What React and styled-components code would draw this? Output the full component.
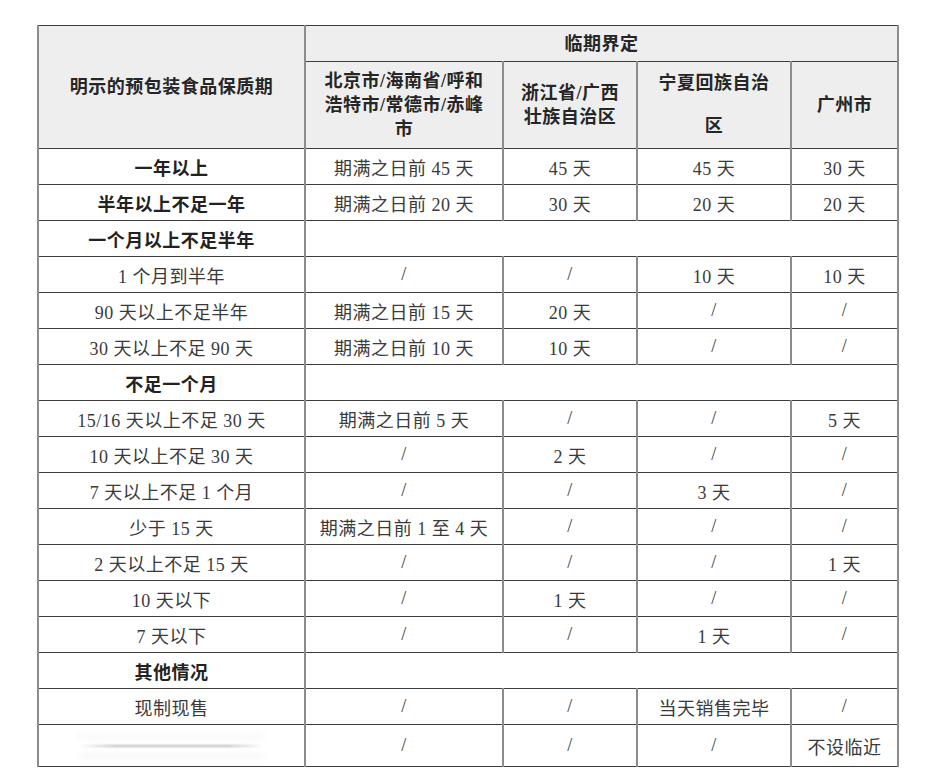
import styled, { createGlobalStyle } from "styled-components";

const GlobalStyle = createGlobalStyle`
  html, body {
    margin: 0;
    padding: 0;
    background: #ffffff;
  }
`;

const Page = styled.div`
  width: 935px;
  height: 774px;
  padding: 25px 0 0 37px;
  box-sizing: border-box;
  background: #ffffff;
  font-family: "Liberation Serif", "Noto Sans CJK SC", serif;
`;

const Table = styled.table`
  width: 860px;
  table-layout: fixed;
  border-collapse: collapse;
  color: #333333;
  font-size: 18px;
  letter-spacing: 0.5px;
`;

const Cell = styled.td`
  height: ${(p) => p.$h || 36}px;
  padding: 0;
  text-align: center;
  vertical-align: middle;
  box-sizing: border-box;
  border-top: 1px solid #3c3c3c;
  border-bottom: 1px solid #3c3c3c;
  border-left: 2px solid #8c8c8c;
  border-right: 2px solid #8c8c8c;
  white-space: nowrap;
  font-weight: ${(p) => (p.$bold ? 700 : 400)};
  color: ${(p) => (p.$bold ? "#222222" : "#3a3a3a")};
`;

const HeadCell = styled(Cell).attrs({ as: "th" })`
  background: #eeeeee;
  font-weight: 700;
  color: #262626;
  line-height: ${(p) => p.$lh || 24}px;
`;

const Smudge = styled.span`
  display: block;
  width: 185px;
  height: 2px;
  margin: 0 auto;
  background: linear-gradient(90deg, rgba(180,180,180,0), #b8b8b8 20%, #b8b8b8 80%, rgba(180,180,180,0));
  filter: blur(1px);
  box-shadow: 0 -10px 6px rgba(220, 220, 220, 0.6), 0 10px 6px rgba(220, 220, 220, 0.6);
`;

// first entry: [label, bold]
const rows = [
  [["一年以上", true], "期满之日前 45 天", "45 天", "45 天", "30 天"],
  [["半年以上不足一年", true], "期满之日前 20 天", "30 天", "20 天", "20 天"],
  [["一个月以上不足半年", true]],
  [["1 个月到半年"], "/", "/", "10 天", "10 天"],
  [["90 天以上不足半年"], "期满之日前 15 天", "20 天", "/", "/"],
  [["30 天以上不足 90 天"], "期满之日前 10 天", "10 天", "/", "/"],
  [["不足一个月", true]],
  [["15/16 天以上不足 30 天"], "期满之日前 5 天", "/", "/", "5 天"],
  [["10 天以上不足 30 天"], "/", "2 天", "/", "/"],
  [["7 天以上不足 1 个月"], "/", "/", "3 天", "/"],
  [["少于 15 天"], "期满之日前 1 至 4 天", "/", "/", "/"],
  [["2 天以上不足 15 天"], "/", "/", "/", "1 天"],
  [["10 天以下"], "/", "1 天", "/", "/"],
  [["7 天以下"], "/", "/", "1 天", "/"],
  [["其他情况", true]],
  [["现制现售"], "/", "/", "当天销售完毕", "/"],
];

const App = () => {
  return (
    <Page>
      <GlobalStyle />
      <Table>
        <colgroup>
          <col style={{ width: 267 }} />
          <col style={{ width: 198 }} />
          <col style={{ width: 134 }} />
          <col style={{ width: 154 }} />
          <col style={{ width: 107 }} />
        </colgroup>
        <thead>
          <tr>
            <HeadCell rowSpan={2}>明示的预包装食品保质期</HeadCell>
            <HeadCell colSpan={4} $h={36}>
              临期界定
            </HeadCell>
          </tr>
          <tr>
            <HeadCell $h={86}>
              北京市/海南省/呼和
              <br />
              浩特市/常德市/赤峰
              <br />市
            </HeadCell>
            <HeadCell $h={86}>
              浙江省/广西
              <br />
              壮族自治区
            </HeadCell>
            <HeadCell $h={86} $lh={43}>
              宁夏回族自治
              <br />区
            </HeadCell>
            <HeadCell $h={86}>广州市</HeadCell>
          </tr>
        </thead>
        <tbody>
          {rows.map(([[label, bold], ...rest], i) => (
            <tr key={i}>
              <Cell $bold={bold}>{label}</Cell>
              {rest.length === 0 ? (
                <Cell colSpan={4} />
              ) : (
                rest.map((c, j) => <Cell key={j}>{c}</Cell>)
              )}
            </tr>
          ))}
          <tr>
            <Cell $h={42}>
              <Smudge />
            </Cell>
            <Cell $h={42}>/</Cell>
            <Cell $h={42}>/</Cell>
            <Cell $h={42}>/</Cell>
            <Cell $h={42}>不设临近</Cell>
          </tr>
        </tbody>
      </Table>
    </Page>
  );
};

export default App;
